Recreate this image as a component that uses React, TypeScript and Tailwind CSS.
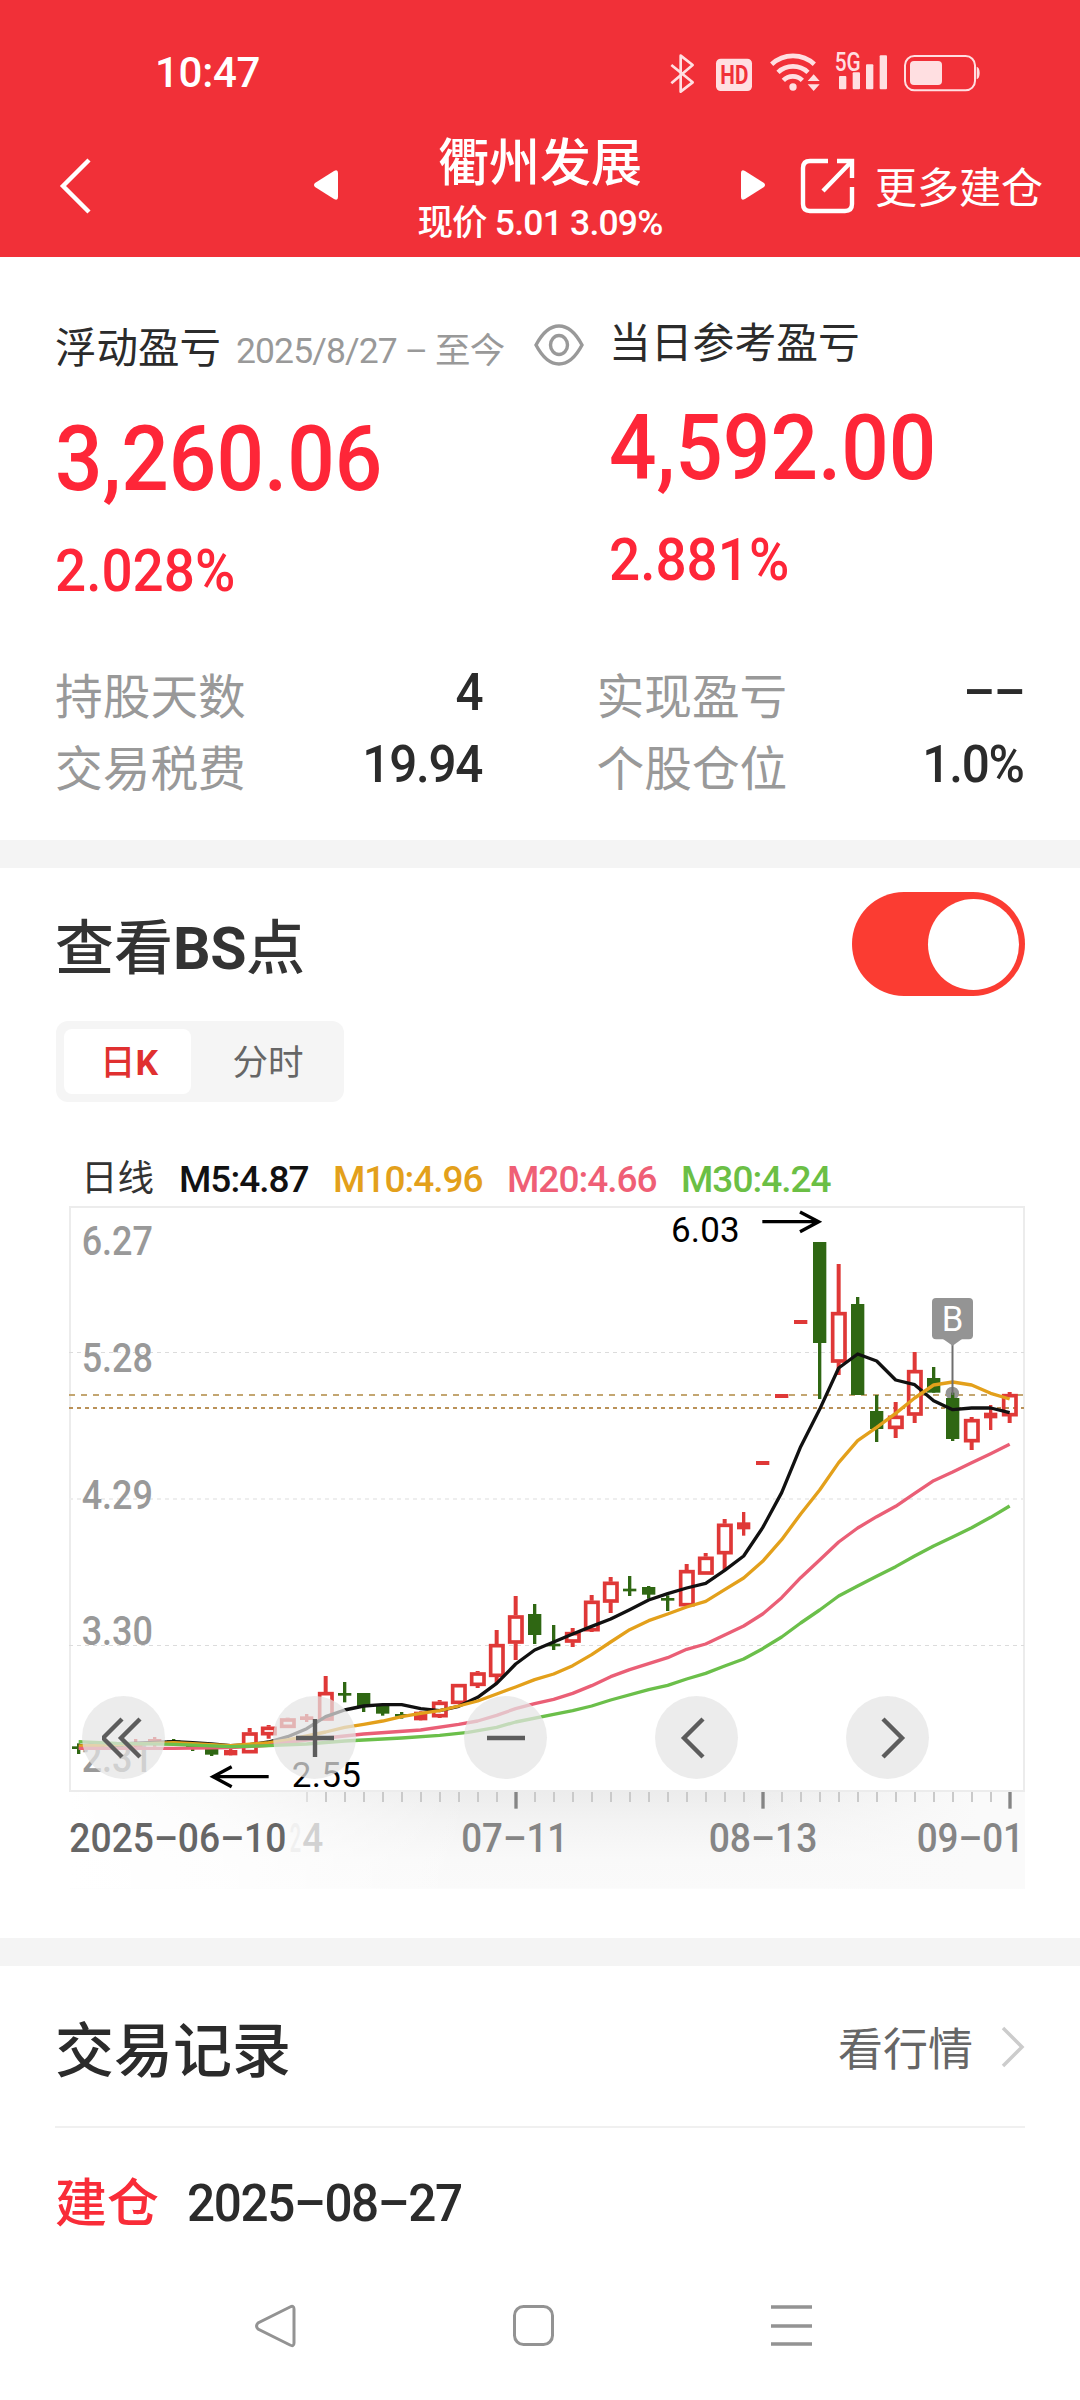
import type { ReactNode } from 'react'

type CandleKind = 'up' | 'solid' | 'down'

// kind, high, body top, body bottom, low (chart units, 3 per pixel)
type Candle = [CandleKind, number, number, number, number]

const CANDLES: Candle[] = [
  ['down', 1630, 1639, 1647, 1662],
  ['down', 1630, 1634, 1642, 1650],
  ['down', 1626, 1630, 1640, 1648],
  ['solid', 1617, 1630, 1640, 1644],
  ['solid', 1611, 1617, 1630, 1640],
  ['down', 1617, 1621, 1634, 1636],
  ['down', 1628, 1634, 1642, 1653],
  ['down', 1636, 1642, 1664, 1668],
  ['solid', 1646, 1650, 1666, 1666],
  ['up', 1584, 1597, 1659, 1659],
  ['up', 1575, 1580, 1605, 1616],
  ['up', 1553, 1555, 1583, 1583],
  ['solid', 1542, 1549, 1560, 1566],
  ['up', 1428, 1476, 1561, 1561],
  ['down', 1446, 1479, 1487, 1507],
  ['down', 1479, 1479, 1520, 1536],
  ['down', 1517, 1517, 1541, 1547],
  ['down', 1536, 1542, 1550, 1556],
  ['solid', 1534, 1535, 1561, 1561],
  ['up', 1500, 1505, 1551, 1554],
  ['up', 1452, 1452, 1511, 1511],
  ['up', 1413, 1417, 1457, 1464],
  ['up', 1290, 1332, 1430, 1450],
  ['up', 1188, 1246, 1330, 1380],
  ['down', 1212, 1242, 1305, 1332],
  ['down', 1275, 1331, 1339, 1350],
  ['up', 1284, 1296, 1327, 1341],
  ['up', 1185, 1202, 1293, 1296],
  ['up', 1131, 1145, 1207, 1239],
  ['down', 1128, 1166, 1174, 1188],
  ['down', 1158, 1161, 1184, 1196],
  ['down', 1186, 1194, 1202, 1233],
  ['up', 1092, 1110, 1218, 1218],
  ['up', 1059, 1070, 1123, 1123],
  ['up', 957, 971, 1062, 1110],
  ['solid', 936, 967, 988, 1007],
  ['solid', 783, 783, 795, 795],
  ['solid', 582, 582, 594, 594],
  ['solid', 360, 360, 372, 372],
  ['down', 126, 126, 429, 597],
  ['up', 192, 336, 487, 525],
  ['down', 291, 312, 585, 585],
  ['down', 585, 633, 687, 726],
  ['up', 606, 647, 686, 714],
  ['up', 456, 510, 646, 669],
  ['down', 501, 534, 578, 578],
  ['down', 578, 594, 717, 723],
  ['up', 651, 657, 726, 750],
  ['solid', 615, 638, 655, 690],
  ['up', 576, 582, 648, 669],
]

const AVERAGES = [
  {
    color: '#111111',
    points:
      '86,1637 371,1625 428,1628 485,1632 542,1637 599,1634 656,1626 713,1610 770,1586 827,1550 884,1530 941,1518 998,1514 1055,1514 1112,1526 1169,1532 1226,1519 1283,1492 1340,1450 1397,1392 1454,1350 1511,1326 1568,1302 1625,1279 1682,1257 1739,1229 1796,1200 1853,1181 1910,1164 1967,1150 2024,1111 2081,1068 2138,983 2195,878 2252,740 2309,628 2366,504 2423,462 2480,483 2537,540 2594,554 2651,602 2708,629 2765,624 2822,624 2879,638',
  },
  {
    color: '#e3a01b',
    points:
      '86,1638 371,1628 542,1637 656,1628 713,1620 770,1608 827,1596 884,1582 941,1573 998,1563 1055,1550 1112,1540 1169,1532 1226,1518 1283,1503 1340,1482 1397,1461 1454,1439 1511,1422 1568,1397 1625,1364 1682,1326 1739,1289 1796,1262 1853,1242 1910,1221 1967,1204 2024,1169 2081,1134 2138,1084 2195,1019 2252,942 2309,870 2366,788 2423,722 2480,682 2537,640 2594,594 2651,555 2708,546 2765,555 2822,580 2879,597',
  },
  {
    color: '#ea5f76',
    points:
      '86,1645 371,1645 542,1643 656,1636 770,1620 884,1608 941,1602 1112,1590 1226,1573 1283,1563 1340,1546 1397,1526 1454,1511 1511,1498 1568,1480 1625,1457 1682,1430 1739,1409 1853,1373 1910,1348 1967,1332 2024,1305 2081,1278 2138,1242 2195,1193 2252,1133 2309,1080 2366,1026 2423,984 2480,950 2537,919 2594,880 2651,842 2708,816 2765,788 2822,761 2879,733',
  },
  {
    color: '#6bbf4a',
    points:
      '86,1625 200,1630 371,1633 542,1640 656,1637 770,1632 884,1623 941,1620 1055,1614 1169,1606 1254,1597 1340,1582 1397,1566 1511,1543 1568,1532 1625,1518 1682,1500 1796,1469 1853,1456 1910,1437 1967,1420 2024,1398 2081,1377 2138,1346 2195,1311 2252,1269 2309,1230 2366,1188 2423,1158 2480,1129 2537,1100 2594,1068 2651,1038 2708,1011 2765,983 2822,952 2879,918',
  },
]

const PRICE_LABELS = [
  { text: '6.27', y: 165 },
  { text: '5.28', y: 516 },
  { text: '4.29', y: 928 },
  { text: '3.30', y: 1335 },
  { text: '2.31', y: 1716 },
]

const DATE_LABELS = [
  { text: '2025–06–10', x: 58, width: 651, color: '#666666' },
  { text: '2', x: 719, width: 34, color: '#f0f0f0' },
  { text: '4', x: 757, width: 63, color: '#d2d2d2' },
  { text: '07–11', x: 1234, width: 320, color: '#858585' },
  { text: '08–13', x: 1976, width: 326, color: '#858585' },
  { text: '09–01', x: 2600, width: 322, color: '#858585' },
]

const LEGEND = [
  { text: 'M5:4.87', className: 'w-[154px] text-[#111]' },
  { text: 'M10:4.96', className: 'w-[174px] text-[#e3a01b]' },
  { text: 'M20:4.66', className: 'w-[174px] text-[#ef5f76]' },
  { text: 'M30:4.24', className: 'text-[#6bbf45]' },
]

const STATS = [
  { label: '持股天数', value: '4' },
  { label: '实现盈亏', value: '––' },
  { label: '交易税费', value: '19.94' },
  { label: '个股仓位', value: '1.0%' },
]

const TICKS = Array.from({ length: 38 }, (_, i) => 771 + i * 57)
const MAJOR_TICKS = [1398, 2139, 2880]

const RED = '#df3837'
const GREEN = '#2f6713'

function StatusIcons() {
  return (
    <svg width="320" height="50" viewBox="0 0 960 150" fill="#ffdfe1" className="mt-[4px] block overflow-visible">
      {/* Bluetooth */}
      <path
        d="M34 45l64 52-36 28V17l36 28-64 55"
        fill="none"
        stroke="#ffdfe1"
        strokeWidth="8"
        strokeLinejoin="round"
      />
      {/* HD */}
      <rect x="168" y="26" width="108" height="97" rx="14" />
      <text
        x="181"
        y="101"
        fontSize="76"
        fontWeight="700"
        fill="#f13038"
        textLength="84"
        lengthAdjust="spacingAndGlyphs"
      >
        HD
      </text>
      {/* Wi-Fi */}
      <g fill="none" stroke="#ffdfe1" strokeWidth="14">
        <path d="M335 43a94 94 0 0 1 128 0" />
        <path d="M354 67a66 66 0 0 1 90 0" />
        <path d="M370 91a40 40 0 0 1 57 0" />
      </g>
      <circle cx="399" cy="111" r="11" />
      <path d="M443 93l18-20 18 20zM443 103h36l-18 20z" />
      {/* Signal */}
      <text x="524" y="62" fontSize="75" fontWeight="500" textLength="78" lengthAdjust="spacingAndGlyphs">
        5G
      </text>
      <rect x="537" y="78" width="22" height="40" rx="3" />
      <rect x="578" y="67" width="22" height="51" rx="3" />
      <rect x="618" y="43" width="22" height="75" rx="3" />
      <rect x="659" y="16" width="22" height="102" rx="3" />
      {/* Battery */}
      <rect x="735" y="18" width="210" height="103" rx="28" fill="none" stroke="#ffdfe1" strokeWidth="6" />
      <rect x="750" y="33" width="96" height="72" rx="12" />
      <path d="M950 50q9 3 9 19t-9 19z" />
    </svg>
  )
}

function Header() {
  return (
    <header className="h-[257px] bg-[#f13038] text-white">
      <div className="flex h-[120px] items-center justify-between pt-[26px] pr-[100px] pl-[155px]">
        <span className="text-[42px] leading-none font-medium tracking-[-0.3px]">10:47</span>
        <StatusIcons />
      </div>
      <div className="flex h-[137px] items-center">
        <svg
          width="36"
          height="56"
          viewBox="0 0 36 56"
          fill="none"
          stroke="#fff"
          strokeWidth="4.4"
          className="mt-[-5px] ml-[58px]"
        >
          <path d="M31 2L5 28l26 26" />
        </svg>
        <svg width="26" height="34" viewBox="0 0 26 34" fill="#fff" className="mt-[-7px] ml-[219px]">
          <path d="M25 5v24q0 4-4 2L2 19q-2-2 0-4L21 3q4-2 4 2z" />
        </svg>
        <div className="mt-[3px] flex w-[402px] flex-col items-center gap-[17px]">
          <h1 className="text-[51px] leading-none font-medium">衢州发展</h1>
          <p className="text-[35.5px] leading-none font-medium tracking-[-0.8px]">现价 5.01 3.09%</p>
        </div>
        <svg width="26" height="34" viewBox="0 0 26 34" fill="#fff" className="mt-[-7px] ml-[-1px]">
          <path d="M1 5v24q0 4 4 2l19-12q2-2 0-4L5 3Q1 1 1 5z" />
        </svg>
        <svg
          width="56"
          height="56"
          viewBox="0 0 56 56"
          fill="none"
          stroke="#fff"
          strokeWidth="4.4"
          className="mt-[-5px] ml-[34px]"
        >
          <path d="M28 3H10q-7 0-7 7v36q0 7 7 7h35q7 0 7-7V29" />
          <path d="M37 3h15v17M52 3L23 33" />
        </svg>
        <span className="ml-[19px] text-[42px] leading-none">更多建仓</span>
      </div>
    </header>
  )
}

function ProfitFigures({ amount, percent }: { amount: string; percent: string }) {
  return (
    <div className="origin-left scale-x-93 font-medium text-[#fe2638]">
      <p className="h-[126px] text-[90px] leading-none">{amount}</p>
      <p className="text-[59px] leading-none">{percent}</p>
    </div>
  )
}

function ProfitSummary() {
  return (
    <section className="h-[583px]">
      <div className="flex h-[418px] pl-[55px]">
        <div className="w-[554px] pt-[71px]">
          <div className="flex h-[87px] w-[530px] items-start justify-between">
            <p className="flex items-baseline text-[41.5px] leading-none text-[#2b2b2b]">
              浮动盈亏
              <span className="ml-[15px] text-[35.5px] leading-none tracking-[-0.9px] text-[#999]">
                2025/8/27 – 至今
              </span>
            </p>
            <svg
              width="52"
              height="42"
              viewBox="0 0 52 42"
              fill="none"
              stroke="#999"
              strokeWidth="3.4"
              className="mt-[-4px]"
            >
              <path d="M3 21Q13 2 26 2t23 19Q39 40 26 40T3 21z" />
              <ellipse cx="26" cy="21" rx="8.5" ry="9.5" />
            </svg>
          </div>
          <ProfitFigures amount="3,260.06" percent="2.028%" />
        </div>
        <div className="pt-[66px]">
          <p className="h-[81px] text-[41.8px] leading-none text-[#2b2b2b]">当日参考盈亏</p>
          <ProfitFigures amount="4,592.00" percent="2.881%" />
        </div>
      </div>
      <div className="grid grid-cols-2 gap-x-[114px] pr-[56px] pl-[55px]">
        {STATS.map(stat => (
          <div key={stat.label} className="flex h-[72px] items-start justify-between">
            <span className="text-[47.7px] leading-none text-[#999]">{stat.label}</span>
            <span className="mt-[-8px] origin-right scale-x-95 text-[52px] leading-none font-medium tracking-[-1.3px] text-[#2b2b2b]">
              {stat.value}
            </span>
          </div>
        ))}
      </div>
    </section>
  )
}

function CandleShape({ candle, x }: { candle: Candle; x: number }) {
  const [kind, high, top, bottom, low] = candle
  if (kind === 'up') {
    return (
      <g>
        <path d={`M${x} ${high}V${top}M${x} ${bottom}V${low}`} stroke={RED} strokeWidth="12" />
        <rect x={x - 18} y={top + 5} width="37" height={bottom - top - 9} fill="none" stroke={RED} strokeWidth="11" />
      </g>
    )
  }
  const color = kind === 'down' ? GREEN : RED
  return (
    <g fill={color}>
      <rect x={x - 5} y={high} width="10" height={low - high} />
      <rect x={x - 20} y={top} width="40" height={bottom - top} />
    </g>
  )
}

function Chart() {
  return (
    <svg width="1020" height="700" viewBox="0 0 3060 2100" className="block">
      <defs>
        <linearGradient id="axisShade" x1="0" y1="0" x2="0" y2="1">
          <stop offset="0" stopColor="#ececec" />
          <stop offset="0.3" stopColor="#f3f3f3" />
          <stop offset="0.7" stopColor="#f9f9f9" />
          <stop offset="1" stopColor="#fafafa" />
        </linearGradient>
        <linearGradient id="axisFade" x1="0" y1="0" x2="1" y2="0">
          <stop offset="0" stopColor="#fff" />
          <stop offset="0.16" stopColor="#fff" stopOpacity="0.75" />
          <stop offset="0.42" stopColor="#fff" stopOpacity="0" />
          <stop offset="0.7" stopColor="#fafafa" stopOpacity="0" />
          <stop offset="0.95" stopColor="#fafafa" />
        </linearGradient>
      </defs>

      {/* Date axis background */}
      <rect x="60" y="1773" width="2865" height="293" fill="url(#axisShade)" />
      <rect x="60" y="1773" width="2865" height="293" fill="url(#axisFade)" />

      {/* Frame and grid */}
      <rect x="60" y="21" width="2862" height="1752" fill="none" stroke="#ececec" strokeWidth="6" />
      <path d="M57 457.5H2922M57 1336.5H2922" stroke="#dcdcdc" strokeWidth="3" strokeDasharray="12 12" />
      <path d="M57 897H2922" stroke="#eeeeee" strokeWidth="6" strokeDasharray="12 12" />
      <path d="M57 585H2922" stroke="#c3a671" strokeWidth="6" strokeDasharray="18 18" />
      <path d="M57 624H2922" stroke="#ba9158" strokeWidth="6" strokeDasharray="12 12" />

      {PRICE_LABELS.map(label => (
        <text
          key={label.text}
          x="95"
          y={label.y}
          fontSize="122"
          fontWeight="500"
          fill="#999"
          textLength="214"
          lengthAdjust="spacingAndGlyphs"
        >
          {label.text}
        </text>
      ))}

      {/* Buy marker */}
      <circle cx="2707" cy="580" r="20" fill="#949494" />
      {CANDLES.map((candle, i) => (
        <CandleShape key={i} candle={candle} x={86 + i * 57} />
      ))}
      {AVERAGES.map(line => (
        <polyline
          key={line.color}
          points={line.points}
          fill="none"
          stroke={line.color}
          strokeWidth="10"
          strokeLinejoin="round"
        />
      ))}
      <path d="M2707.500 430V585" stroke="#6e6e6e" strokeWidth="6" />
      <rect x="2646" y="294" width="123" height="124" rx="12" fill="#949494" />
      <path d="M2679 417h57l-28 20z" fill="#949494" />
      <text x="2708" y="392" fontSize="104" fill="#fff" textAnchor="middle">
        B
      </text>

      {/* High and low callouts */}
      <g fill="none" stroke="#000" strokeWidth="10">
        <path d="M2137 65H2306M2250 36L2306 65L2250 95" />
        <path d="M656 1730H487M545 1700L489 1730L545 1760" />
      </g>
      <text x="1863" y="125" fontSize="105" textLength="206">
        6.03
      </text>
      <text x="725" y="1760" fontSize="105" textLength="208">
        2.55
      </text>

      {/* Date axis */}
      {TICKS.map((x, i) => (
        <path key={x} d={`M${x} 1776V1806`} stroke="#cacaca" strokeWidth="6" opacity={i === 0 ? 0.5 : 1} />
      ))}
      {MAJOR_TICKS.map(x => (
        <path key={x} d={`M${x} 1776V1826`} stroke="#858585" strokeWidth="10" />
      ))}
      {DATE_LABELS.map(label => (
        <text
          key={label.text}
          x={label.x}
          y="1955"
          fontSize="121"
          fontWeight="500"
          fill={label.color}
          textLength={label.width}
          lengthAdjust="spacingAndGlyphs"
        >
          {label.text}
        </text>
      ))}
    </svg>
  )
}

function ChartButton({ children }: { children: ReactNode }) {
  return (
    <button className="flex size-[83px] items-center justify-center rounded-full bg-[#e5e5e5]/72">
      <svg width="44" height="44" viewBox="0 0 44 44" fill="none" stroke="#5c5c5c" strokeWidth="4.4">
        {children}
      </svg>
    </button>
  )
}

function BsSection() {
  return (
    <section className="h-[1070px]">
      <div className="flex h-[153px] items-start justify-between pr-[55px] pl-[55px]">
        <h2 className="mt-[51px] text-[59px] leading-none font-medium text-[#333]">
          查看<span className="font-bold tracking-[-0.5px]">BS</span>点
        </h2>
        <div className="mt-[24px] flex h-[104px] w-[173px] items-center justify-end rounded-full bg-[#fb3c32] pr-[6px]">
          <div className="size-[91px] rounded-full bg-white" />
        </div>
      </div>
      <div className="ml-[56px] flex h-[81px] w-[288px] rounded-xl bg-[#f5f5f5] p-[8px] text-[35.5px]">
        <div className="flex w-[127px] items-center justify-center rounded-lg bg-white pt-[5px] pl-[3px] leading-none font-medium text-[#e03030]">
          日<span className="font-bold">K</span>
        </div>
        <div className="flex flex-1 items-center justify-center pt-[5px] pl-[9px] leading-none text-[#666]">分时</div>
      </div>
      <div className="flex h-[98px] items-start pt-[59px] pl-[81px] text-[37px] leading-none font-medium">
        <span className="w-[98px] text-[36.5px] leading-none font-normal text-[#333]">日线</span>
        {LEGEND.map(item => (
          <span key={item.text} className={`tracking-[-1px] ${item.className}`}>
            {item.text}
          </span>
        ))}
      </div>
      <div className="relative ml-[50px] h-[700px] w-[1020px]">
        <Chart />
        <div className="absolute top-[496px] left-[32px] flex gap-[108px]">
          <ChartButton>
            <path d="M20 3L1 22l19 19M38 3L19 22l19 19" />
          </ChartButton>
          <ChartButton>
            <path d="M22 3v38M3 22h38" />
          </ChartButton>
          <ChartButton>
            <path d="M3 22h38" />
          </ChartButton>
          <ChartButton>
            <path d="M28 3L9 22l19 19" />
          </ChartButton>
          <ChartButton>
            <path d="M17 3l19 19-19 19" />
          </ChartButton>
        </div>
      </div>
    </section>
  )
}

function Records() {
  return (
    <section className="h-[289px] px-[55px]">
      <div className="flex h-[162px] items-start border-b-2 border-[#f0f0f0] pt-[56px]">
        <h2 className="text-[59px] leading-none font-medium text-[#2b2b2b]">交易记录</h2>
        <span className="mt-[6px] ml-auto text-[45px] leading-none text-[#666]">看行情</span>
        <svg
          width="24"
          height="42"
          viewBox="0 0 24 42"
          fill="none"
          stroke="#ccc"
          strokeWidth="3.5"
          className="mt-[4px] ml-[28px]"
        >
          <path d="M2 2l19 19L2 40" />
        </svg>
      </div>
      <div className="flex items-start pt-[51px]">
        <span className="text-[52px] leading-none font-medium text-[#f92c38]">建仓</span>
        <span className="mt-[-1px] ml-[28px] origin-left scale-x-95 text-[52px] leading-none font-medium tracking-[-1.4px] text-[#2b2b2b]">
          2025–08–27
        </span>
      </div>
    </section>
  )
}

function NavBar() {
  return (
    <nav className="flex h-[145px] items-center justify-between px-[254px] pb-[4px]">
      <svg width="44" height="44" viewBox="0 0 44 44" fill="none" stroke="#939393" strokeWidth="3">
        <path d="M40 5v34q0 4-4 2L4 25q-3-3 0-6L36 3q4-2 4 2z" />
      </svg>
      <svg width="44" height="44" viewBox="0 0 44 44" fill="none" stroke="#939393" strokeWidth="3">
        <rect x="2.500" y="2.500" width="38" height="38" rx="9" />
      </svg>
      <svg width="57" height="44" viewBox="0 0 57 44" fill="none" stroke="#939393" strokeWidth="3.500">
        <path d="M2 3h41M2 22h41M2 40h41" />
      </svg>
    </nav>
  )
}

export default function App() {
  return (
    <div className="h-[2400px] w-[1080px] overflow-hidden bg-white font-[Roboto,'Noto_Sans_CJK_SC',sans-serif]">
      <Header />
      <ProfitSummary />
      <div className="h-[28px] bg-[#f4f4f4]" />
      <BsSection />
      <div className="h-[28px] bg-[#f4f4f4]" />
      <Records />
      <NavBar />
    </div>
  )
}
